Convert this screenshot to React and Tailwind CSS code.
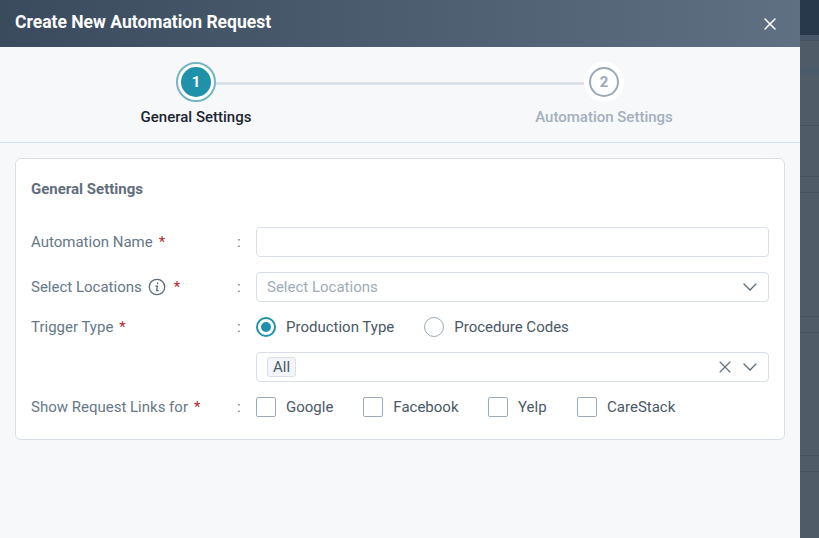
import React from "react";

const Star = ({ className = "" }) => <span className={`text-[#b3282d] ${className}`}>*</span>;

const Chevron = () => (
  <svg width="14" height="8" viewBox="0 0 14 8" fill="none" stroke="#5c6b7a" strokeWidth="1.3" strokeLinecap="round" strokeLinejoin="round">
    <path d="M1 1l6 6 6-6" />
  </svg>
);

const Row = ({ label, children, colon = true, className = "" }) => (
  <div className={`flex items-center ${className}`}>
    <div className="w-[206px] text-[#667788] flex items-center">{label}</div>
    <div className="w-[19px] text-[#667788]">{colon ? ":" : ""}</div>
    <div className="flex-1 min-w-0">{children}</div>
  </div>
);

const Box = ({ children }) => (
  <div className="h-[30px] rounded-[4px] border border-[#d8dfe8] bg-white flex items-center pl-[10px] pr-[11px]">{children}</div>
);

const Check = ({ label, className = "" }) => (
  <div className={`flex items-center gap-[10px] ${className}`}>
    <span className="w-5 h-5 rounded-[2px] border border-[#9aabba] bg-white" />
    <span className="text-[#4a5866]">{label}</span>
  </div>
);

const Band = ({ className = "" }) => <div className={`border-b border-[#45525d] ${className}`} />;

export default function App() {
  return (
    <div className="w-[819px] h-[538px] overflow-hidden flex bg-[#4f5c68] font-['Roboto',sans-serif] text-[15px]">
      <div className="w-[800px] h-full shrink-0 bg-[#f6f8fa] flex flex-col">
        <header className="h-[47px] shrink-0 flex items-center justify-between pl-[15px] pr-[24px] bg-gradient-to-r from-[#394b5d] to-[#5f7083]">
          <h1 className="text-white font-bold text-[17.5px] relative -top-px">Create New Automation Request</h1>
          <svg width="12" height="12" viewBox="0 0 12 12" fill="none" stroke="#fff" strokeWidth="1.5" strokeLinecap="round">
            <path d="M1 1l10 10M11 1L1 11" />
          </svg>
        </header>

        <div className="relative h-[96px] shrink-0 border-b border-[#d8e0e9] flex justify-between px-[96px] pt-[15px]">
          <div className="absolute left-[216px] w-[368px] top-[35px] h-[3px] bg-[#dbe0e9]" />
          <div className="relative w-[200px] flex flex-col items-center">
            <div className="w-10 h-10 rounded-full border-2 border-[#77b4c2] bg-white flex items-center justify-center">
              <div className="w-[30px] h-[30px] rounded-full bg-[#1f91a8] text-white font-bold text-[15px] flex items-center justify-center">1</div>
            </div>
            <div className="mt-[4px] font-medium text-[#1c2530]">General Settings</div>
          </div>
          <div className="relative w-[200px] flex flex-col items-center">
            <div className="w-10 h-10 rounded-full bg-white flex items-center justify-center">
              <div className="w-[30px] h-[30px] rounded-full border-2 border-[#9aa9b8] text-[#9aa9b8] font-bold text-[15px] flex items-center justify-center">2</div>
            </div>
            <div className="mt-[4px] font-medium text-[#a3afbd]">Automation Settings</div>
          </div>
        </div>

        <div className="mx-[15px] mt-[15px] h-[282px] rounded-[6px] border border-[#d8dfe8] bg-white px-[15px] pt-[21px]">
          <h2 className="font-bold text-[15px] text-[#5f6e7d] leading-[18px]">General Settings</h2>
          <Row className="mt-[29px] h-[30px]" label={<>Automation Name<Star className="ml-[6px]" /></>}>
            <Box />
          </Row>
          <Row className="mt-[15px] h-[30px]" label={
            <>
              Select Locations
              <svg className="ml-[6px]" width="18" height="18" viewBox="0 0 18 18" fill="none" stroke="#5c6b7a" strokeWidth="1.3">
                <circle cx="9" cy="9" r="7.7" />
                <path d="M9.6 5v.8M7.9 8.2h1.5L8.6 12.6h1.7" strokeLinecap="round" strokeLinejoin="round" />
              </svg>
              <Star className="ml-[8px]" />
            </>
          }>
            <Box>
              <span className="text-[#9eacba] flex-1">Select Locations</span>
              <Chevron />
            </Box>
          </Row>
          <Row className="mt-[10px] h-[30px]" label={<>Trigger Type<Star className="ml-[6px]" /></>}>
            <div className="flex items-center">
              <span className="w-5 h-5 rounded-full border-2 border-[#1f91a8] flex items-center justify-center bg-white">
                <span className="w-[10px] h-[10px] rounded-full bg-[#1f91a8]" />
              </span>
              <span className="ml-[10px] text-[#4a5866]">Production Type</span>
              <span className="ml-[30px] w-5 h-5 rounded-full border border-[#9aabba] bg-white" />
              <span className="ml-[10px] text-[#4a5866]">Procedure Codes</span>
            </div>
          </Row>
          <Row className="mt-[10px] h-[30px]" colon={false} label={null}>
            <Box>
              <span className="h-[20px] px-[5px] rounded-[3px] border border-[#d8dfe8] bg-[#f3f5f8] text-[#4a5866] flex items-center">All</span>
              <span className="flex-1" />
              <svg className="mr-[12px]" width="12" height="12" viewBox="0 0 12 12" fill="none" stroke="#5c6b7a" strokeWidth="1.1" strokeLinecap="round">
                <path d="M1 1l10 10M11 1L1 11" />
              </svg>
              <Chevron />
            </Box>
          </Row>
          <Row className="mt-[10px] h-[30px]" label={<>Show Request Links for<Star className="ml-[6px]" /></>}>
            <div className="flex items-center">
              <Check label="Google" />
              <Check label="Facebook" className="ml-[30px]" />
              <Check label="Yelp" className="ml-[29.5px]" />
              <Check label="CareStack" className="ml-[30.5px]" />
            </div>
          </Row>
        </div>
      </div>

      <div className="flex-1 flex flex-col">
        <div className="h-[35px] bg-[#27394b]" />
        <Band className="h-[6px] bg-[#48586a]" />
        <div className="h-[27px]" />
        <div className="h-[7px] bg-[#4a5c6b]" />
        <Band className="h-[51px]" />
        <Band className="h-[51px]" />
        <Band className="h-[16px]" />
        <Band className="h-[124px]" />
        <Band className="h-[16px]" />
        <Band className="h-[123px]" />
        <Band className="h-[16px]" />
      </div>
    </div>
  );
}
